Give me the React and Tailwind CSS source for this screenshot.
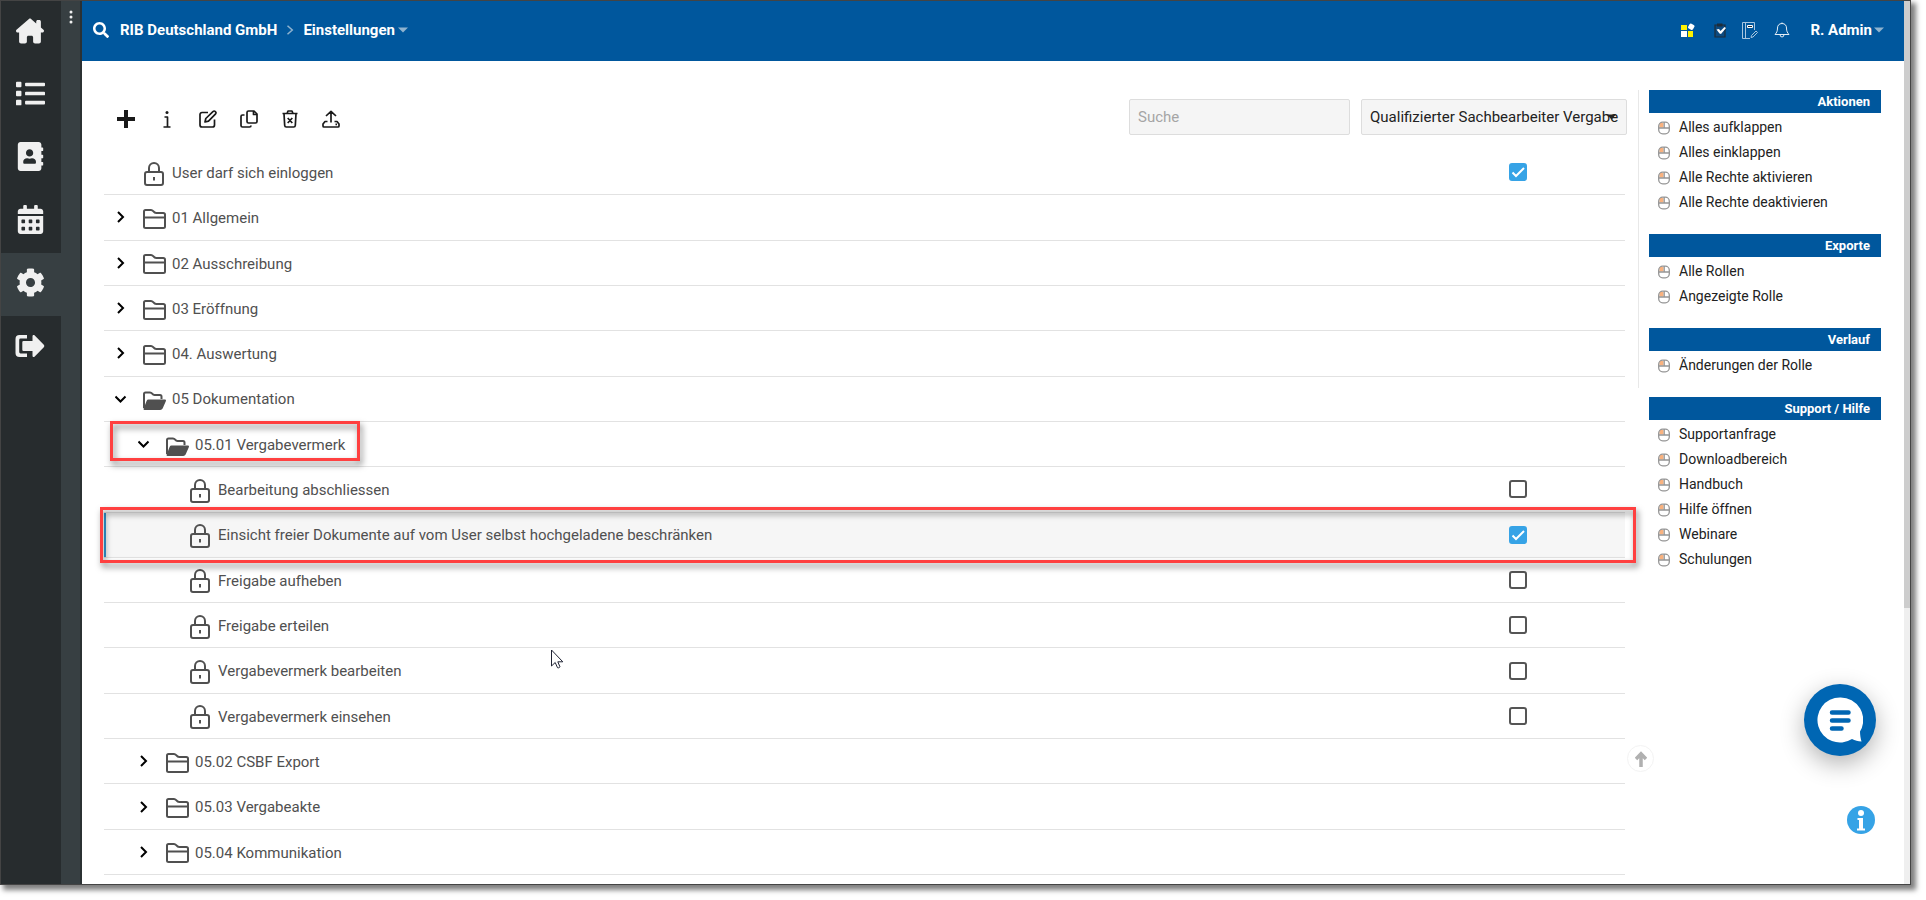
// src/App.jsx
import { useState } from "react";
import { FaList, FaAddressBook, FaCalendarAlt, FaCog, FaSearch } from "react-icons/fa";
import { FaHouseChimney } from "react-icons/fa6";

const rows = [
  { id: "login", level: 0, type: "right", label: "User darf sich einloggen", checked: true },
  { id: "01", level: 0, type: "closed", label: "01 Allgemein" },
  { id: "02", level: 0, type: "closed", label: "02 Ausschreibung" },
  { id: "03", level: 0, type: "closed", label: "03 Eröffnung" },
  { id: "04", level: 0, type: "closed", label: "04. Auswertung" },
  { id: "05", level: 0, type: "open", label: "05 Dokumentation" },
  { id: "05.01", level: 1, type: "open", label: "05.01 Vergabevermerk", marked: true },
  { id: "close", level: 2, type: "right", label: "Bearbeitung abschliessen" },
  {
    id: "view-free",
    level: 2,
    type: "right",
    label: "Einsicht freier Dokumente auf vom User selbst hochgeladene beschränken",
    checked: true,
    active: true,
  },
  { id: "revoke", level: 2, type: "right", label: "Freigabe aufheben" },
  { id: "grant", level: 2, type: "right", label: "Freigabe erteilen" },
  { id: "edit", level: 2, type: "right", label: "Vergabevermerk bearbeiten", pointer: true },
  { id: "view", level: 2, type: "right", label: "Vergabevermerk einsehen" },
  { id: "05.02", level: 1, type: "closed", label: "05.02 CSBF Export" },
  { id: "05.03", level: 1, type: "closed", label: "05.03 Vergabeakte" },
  { id: "05.04", level: 1, type: "closed", label: "05.04 Kommunikation" },
];

const sections = [
  {
    title: "Aktionen",
    links: ["Alles aufklappen", "Alles einklappen", "Alle Rechte aktivieren", "Alle Rechte deaktivieren"],
  },
  { title: "Exporte", links: ["Alle Rollen", "Angezeigte Rolle"] },
  { title: "Verlauf", links: ["Änderungen der Rolle"] },
  {
    title: "Support / Hilfe",
    links: ["Supportanfrage", "Downloadbereich", "Handbuch", "Hilfe öffnen", "Webinare", "Schulungen"],
  },
];

const indent = ["pl-0", "pl-[23px]", "pl-[46px]"];

/* Icons */

const SignOutIcon = () => (
  <svg width="30" height="24" viewBox="0 0 30 24" fill="currentColor">
    <path d="M12 1H4.5A4 4 0 0 0 .5 5v14a4 4 0 0 0 4 4H12v-3.6H5.6a1.4 1.4 0 0 1-1.4-1.4V6a1.4 1.4 0 0 1 1.4-1.4H12z" />
    <path d="M8.5 7h9V2.2c0-1.2 1.2-1.7 2-.9l9.3 9.5a1.7 1.7 0 0 1 0 2.4l-9.3 9.5c-.8.8-2 .3-2-.9V17h-9A1.2 1.2 0 0 1 7.300 15.800V8.200A1.200 1.200 0 0 1 8.500 7z" />
  </svg>
);

const FolderIcon = () => (
  <svg width="24" height="22" viewBox="0 0 24 22" fill="none" stroke="currentColor" strokeWidth="2" strokeLinejoin="round">
    <path d="M2 18.500V3.500C2 2.500 2.500 2 3.500 2H9c1 0 1.600.500 2.200 1.200.8 1 1.500 1.800 3 1.800h7c1 0 1.800.6 1.800 1.700v11.800c0 1-.7 1.500-1.700 1.500h-17.600c-1 0-1.700-.5-1.700-1.500zM2 9.500h21" />
  </svg>
);

const FolderOpenIcon = () => (
  <svg width="24" height="22" viewBox="0 0 24 22" fill="none" stroke="currentColor" strokeWidth="2" strokeLinejoin="round">
    <path d="M2 19V5c0-1 .5-1.500 1.500-1.500H8c1 0 1.600.5 2.200 1.200.6.8 1.300 1.300 2.300 1.300H18c1 0 1.500.5 1.500 1.500V10" />
    <path d="M6.500 11.500H23l-3.300 7.600c-.3.600-.7.900-1.400.9H2.500l3-7.700c.2-.5.500-.8 1-.8z" fill="currentColor" />
  </svg>
);

const LockIcon = () => (
  <svg width="24" height="26" viewBox="0 0 24 26" fill="none" stroke="currentColor" strokeWidth="2">
    <rect x="3" y="11" width="18" height="13" rx="2" />
    <path d="M7 11V7a5 5 0 0 1 10 0v4" />
    <path d="M12 16v3.500" />
  </svg>
);

const Chevron = ({ open }) => (
  <svg width="12" height="12" viewBox="0 0 12 12" fill="none" stroke="#000" strokeWidth="2">
    <path d={open ? "M.5 3.500 5.500 8.500 10.500 3.500" : "M3 1 8 6 3 11"} />
  </svg>
);

const Caret = () => (
  <svg width="10" height="6" viewBox="0 0 10 6" fill="#8fb3cf">
    <path d="M0 .5h10L5 5.500z" />
  </svg>
);

const MouseIcon = () => (
  <svg width="12" height="14" viewBox="0 0 12 14" fill="none" stroke="#959595" strokeWidth="1.300">
    <rect x="1.500" y="2" width="4" height="4.500" fill="#f9b27f" stroke="none" />
    <rect x=".7" y="1.200" width="10.600" height="11.600" rx="4" />
    <path d="M6.200 1v6M.5 7h11" />
  </svg>
);

const PointerIcon = () => (
  <svg width="13" height="20" viewBox="0 0 13 20" fill="#fff" stroke="#1e2233" strokeWidth="1">
    <path d="M.5 1v16l3.700-3.500 2.300 5.200c.8.400 2 0 2.500-.8L6.800 12.800h5z" />
  </svg>
);

const toolbar = [
  {
    label: "Neu",
    icon: <path d="M9 0v18M0 9h18" strokeWidth="4" />,
  },
  {
    label: "Info",
    icon: (
      <>
        <path d="M6.500 7h3v9.500M5.500 17h7" />
        <circle cx="9" cy="2.500" r="1.500" fill="currentColor" stroke="none" />
      </>
    ),
  },
  {
    label: "Bearbeiten",
    icon: (
      <>
        <path d="M9 2.500H3a2 2 0 0 0-2 2V15a2 2 0 0 0 2 2h10.500a2 2 0 0 0 2-2V9.500" />
        <path d="M6 12l.8-3.500L14.200 1.400a1.300 1.300 0 0 1 1.900 0l.5.500a1.300 1.300 0 0 1 0 1.900L9.500 11.200z" />
      </>
    ),
  },
  {
    label: "Kopieren",
    icon: (
      <>
        <path d="M8.500 1h5.500l3 3v7.500a1.500 1.500 0 0 1-1.500 1.500h-7A1.500 1.500 0 0 1 7 11.500v-9A1.500 1.500 0 0 1 8.500 1z" />
        <path d="M13.500 1v3.500H17" />
        <path d="M4.500 5h-2A1.500 1.500 0 0 0 1 6.500v9A1.500 1.500 0 0 0 2.500 17h7a1.500 1.500 0 0 0 1.500-1.500" />
      </>
    ),
  },
  {
    label: "Löschen",
    icon: (
      <path d="M1.500 3.500h15M6 3.500 7 1h4l1 2.500M3 3.500l.7 12A1.600 1.600 0 0 0 5.300 17h7.400a1.600 1.600 0 0 0 1.600-1.500l.7-12M6.700 8l4.600 5M11.300 8l-4.600 5" />
    ),
  },
  {
    label: "Exportieren",
    icon: (
      <>
        <path d="M9 12.500V1.500M4 6l5-4.700L14 6M5.500 11.500H3L1 14v2a1 1 0 0 0 1 1h14a1 1 0 0 0 1-1v-2l-2-2.500h-2.500" />
        <path d="M13.500 14.300h1.500" />
      </>
    ),
  },
];

const navItems = [
  { label: "Start", icon: <FaHouseChimney size={28} /> },
  { label: "Liste", icon: <FaList size={29} /> },
  { label: "Adressbuch", icon: <FaAddressBook size={29} /> },
  { label: "Kalender", icon: <FaCalendarAlt size={29} /> },
  { label: "Einstellungen", icon: <FaCog size={29} />, active: true },
  { label: "Abmelden", icon: <SignOutIcon /> },
];

const Sidebar = () => (
  <>
    <nav className="flex w-[60px] shrink-0 flex-col bg-[#272c2e] text-[#f0f0f0]">
      {navItems.map((item) => (
        <a
          key={item.label}
          href="#"
          aria-label={item.label}
          className={`flex h-[63px] items-center justify-center pb-1 pr-[2px] ${item.active ? "bg-[#373f42]" : ""}`}
        >
          {item.icon}
        </a>
      ))}
    </nav>
    <div className="flex w-[21px] shrink-0 flex-col items-center border-r-2 border-[#2b3133] bg-[#373f42] pt-[9px]">
      <button type="button" aria-label="Menü">
        <svg width="4" height="14" viewBox="0 0 4 14" fill="#f0f0f0">
          <circle cx="2" cy="2" r="1.500" />
          <circle cx="2" cy="7" r="1.500" />
          <circle cx="2" cy="12" r="1.500" />
        </svg>
      </button>
    </div>
  </>
);

const Header = () => (
  <header className="flex h-[60px] shrink-0 items-center bg-[#00579d] pb-[2px] pl-[11px] pr-5 text-[15px] font-bold text-white">
    <button type="button" aria-label="Suchen">
      <FaSearch size={16} />
    </button>
    <a href="#" className="ml-[11px]">
      RIB Deutschland GmbH
    </a>
    <svg className="mx-[9px]" width="8" height="10" viewBox="0 0 8 10" fill="none" stroke="#8fb3cf" strokeWidth="1.500">
      <path d="M1.500 .7 6.300 5 1.500 9.300" />
    </svg>
    <button type="button" className="flex items-center gap-[3px]">
      Einstellungen
      <Caret />
    </button>

    <div className="ml-auto flex items-center">
      <button type="button" aria-label="Apps">
        <svg width="14" height="14" viewBox="0 0 14 14">
          <path d="M0 2h6v5H0zM7 8h5v6H7z" fill="#fff200" />
          <path d="M0 8h6v6H0z" fill="#fff" />
          <rect x="7.500" y="1" width="5.500" height="5.500" rx="1.500" fill="#fff" transform="rotate(30 10.250 3.750)" />
        </svg>
      </button>
      <button type="button" aria-label="Aufgaben" className="ml-[19px]">
        <svg width="12" height="16" viewBox="0 0 12 16">
          <path d="M1 3h10v12H1z" fill="#0c4a80" stroke="#1f2d3a" strokeWidth="1.200" />
          <path d="M3 1.500h5.500v3H3z" fill="#1f2d3a" />
          <path d="m2.500 7.500 2.500-.5 1.500 2L10.500 5l1.500 1-5 6-1.500-.5z" fill="#fff" />
        </svg>
      </button>
      <button type="button" aria-label="Notizen" className="ml-[16px]">
        <svg width="16" height="17" viewBox="0 0 16 17" fill="none" stroke="#a8c6df" strokeWidth="1">
          <path d="M8 16.500H.5V.500h12V8M3.500.5v16" />
          <path d="M5.500 3.500h5v2h-5z" stroke="#fff" fill="#1f2d3a" />
          <path d="m9.500 13.500 4.500-4.500 1.500 1.500-4.500 4.500-2 .5z" />
        </svg>
      </button>
      <button type="button" aria-label="Benachrichtigungen" className="ml-[16px]">
        <svg width="16" height="16" viewBox="0 0 16 16" fill="none" stroke="#e5eef6" strokeWidth="1">
          <path d="M8 1.500V.500M8 1.500c-3 0-4.500 2-4.500 4.500 0 3.500-1 4.700-2.500 6.500h14c-1.500-1.800-2.500-3-2.500-6.500 0-2.500-1.500-4.500-4.500-4.500zM6 12.500a2 2.500 0 0 0 4 0" />
        </svg>
      </button>
      <button type="button" className="ml-[20px] flex items-center gap-[2px]">
        R. Admin
        <Caret />
      </button>
    </div>
  </header>
);

const TreeRow = ({ row, checked, onToggle }) => {
  const isRight = row.type === "right";

  return (
    <li
      className={`relative flex min-h-[40px] flex-1 items-center border-b border-[#e2e2e2] pr-[98px] ${
        row.active ? "z-10 bg-[#f6f6f6]" : ""
      }`}
    >
      {row.active && <span className="absolute inset-y-0 left-0 w-[2px] bg-[#3299d4]" />}

      <div className={`flex items-center ${indent[row.level]}`}>
        <span className="flex w-[34px] justify-center">
          {!isRight && (
            <button type="button" aria-label={row.label} aria-expanded={row.type === "open"}>
              <Chevron open={row.type === "open"} />
            </button>
          )}
        </span>
        <span className="ml-1 pt-[3px]">
          {isRight ? <LockIcon /> : row.type === "open" ? <FolderOpenIcon /> : <FolderIcon />}
        </span>
        {isRight ? (
          <label htmlFor={row.id} className="ml-[6px] pt-[2px]">
            {row.label}
          </label>
        ) : (
          <span className="ml-[6px] pt-[2px]">{row.label}</span>
        )}
      </div>

      {isRight && (
        <span className="ml-auto grid">
          <input
            id={row.id}
            type="checkbox"
            checked={checked}
            onChange={() => onToggle(row.id)}
            className="col-start-1 row-start-1 size-[18px] appearance-none rounded-[3px] border-2 border-[#555] bg-white checked:border-[#36a3e6] checked:bg-[#36a3e6]"
          />
          {checked && (
            <svg
              className="pointer-events-none col-start-1 row-start-1"
              width="18"
              height="18"
              viewBox="0 0 18 18"
              fill="none"
              stroke="#fff"
              strokeWidth="2"
            >
              <path d="m3.500 9.500 3.500 3.500 8-8" />
            </svg>
          )}
        </span>
      )}

      {/* Highlight frames */}
      {row.marked && (
        <span className="pointer-events-none absolute -top-px left-[6px] h-[40px] w-[250px] border-3 border-[#ff4040] drop-shadow-[2px_4px_3px_rgba(0,0,0,0.5)]" />
      )}
      {row.active && (
        <span className="pointer-events-none absolute -bottom-[6px] -left-1 -right-[11px] -top-[6px] border-3 border-[#ff4040] drop-shadow-[2px_4px_3px_rgba(0,0,0,0.5)]" />
      )}
      {row.pointer && (
        <span className="pointer-events-none absolute left-[447px] top-px">
          <PointerIcon />
        </span>
      )}
    </li>
  );
};

const ActionPanel = () => (
  <aside className="flex w-[242px] shrink-0 flex-col gap-[19px]">
    {sections.map((section) => (
      <section key={section.title} className="ml-[10px]">
        <h2 className="mb-[2px] h-[23px] bg-[#00579d] pr-[11px] text-right text-[13px] font-bold leading-[23px] text-white">
          {section.title}
        </h2>
        <ul>
          {section.links.map((link) => (
            <li key={link}>
              <a href="#" className="flex h-[25px] items-center gap-[9px] pl-[9px] text-[14px] text-[#222]">
                <MouseIcon />
                {link}
              </a>
            </li>
          ))}
        </ul>
      </section>
    ))}
  </aside>
);

const App = () => {
  const [checkedIds, setCheckedIds] = useState(rows.filter((r) => r.checked).map((r) => r.id));

  const handleToggle = (id) => {
    setCheckedIds((prev) => (prev.includes(id) ? prev.filter((x) => x !== id) : [...prev, id]));
  };

  return (
    <div className="flex min-h-screen bg-white pb-[15px] pr-[15px] font-['Roboto',sans-serif]">
      <div className="relative flex flex-1 border border-[#444] bg-white shadow-[4px_4px_5px_1px_rgba(0,0,0,0.5)]">
        <Sidebar />

        <div className="flex min-w-0 flex-1 flex-col">
          <Header />

          <main className="flex flex-1 pl-[22px] pr-[23px] pt-[29px]">
            <div className="flex min-w-0 flex-1 flex-col pb-[9px]">
              {/* Toolbar */}
              <div className="mr-[11px] mt-[9px] flex h-[51px] items-start">
                <div className="flex h-10 items-center gap-[23px] pl-[13px] text-[#1a1a1a]">
                  {toolbar.map((tool) => (
                    <button key={tool.label} type="button" aria-label={tool.label}>
                      <svg width="18" height="18" viewBox="0 0 18 18" fill="none" stroke="currentColor" strokeWidth="1.700" strokeLinejoin="round">
                        {tool.icon}
                      </svg>
                    </button>
                  ))}
                </div>
                <input
                  type="text"
                  aria-label="Suche"
                  placeholder="Suche"
                  className="ml-auto h-9 w-[221px] rounded-[2px] border border-[#ddd] bg-[#f5f5f5] px-2 text-[15px] placeholder:text-[#a5a5a5]"
                />
                <div className="relative ml-[11px]">
                  <select
                    aria-label="Rolle"
                    className="h-9 w-[266px] appearance-none rounded-[2px] border border-[#ddd] bg-[#f5f5f5] pl-2 text-[15px] text-[#222]"
                  >
                    <option>Qualifizierter Sachbearbeiter Vergabe</option>
                  </select>
                  <svg className="pointer-events-none absolute right-[11px] top-[15px]" width="9" height="6" viewBox="0 0 9 6" fill="#222">
                    <path d="M0 .5h9L4.500 5.500z" />
                  </svg>
                </div>
              </div>

              {/* Rights tree */}
              <ul className="mr-[13px] flex flex-1 flex-col text-[15px] text-[#505050]">
                {rows.map((row) => (
                  <TreeRow key={row.id} row={row} checked={checkedIds.includes(row.id)} onToggle={handleToggle} />
                ))}
              </ul>
            </div>

            <div className="h-[298px] w-px shrink-0 bg-[#e8e8e8]" />
            <ActionPanel />
          </main>
        </div>

        {/* Scrollbar */}
        <div className="w-[6px] shrink-0 bg-[#efefef]">
          <div className="h-[607px] bg-[#cdcdcd]" />
        </div>

        {/* Floating buttons */}
        <a
          href="#"
          aria-label="Nach oben"
          className="absolute bottom-[112px] right-[256px] flex size-[27px] items-center justify-center rounded-full border border-[#f3f3f3] bg-white"
        >
          <svg width="12" height="16" viewBox="0 0 12 16" fill="none" stroke="#b0b0b0" strokeWidth="3.500">
            <path d="M6 16V2.500M1 8 6 2.800l5 5.200" />
          </svg>
        </a>
        <button
          type="button"
          aria-label="Chat"
          className="absolute bottom-[128px] right-[34px] flex size-[72px] items-center justify-center rounded-full bg-[#0066b3] shadow-[0_8px_24px_rgba(0,0,0,0.3)]"
        >
          <svg width="46" height="46" viewBox="0 0 46 46">
            <path d="M23 .5a22.500 22.500 0 1 0 12 41.500c3 1.500 6 2.200 9.500 2.600-.8-3-1.500-6.600-1.500-10A22.500 22.500 0 0 0 23 .5z" fill="#fff" />
            <path d="M15 15.500h16.500M15 23.500h16.500M15 31.500h9.500" stroke="#0066b3" strokeWidth="4.500" strokeLinecap="round" />
          </svg>
        </button>
        <button type="button" aria-label="Information" className="absolute bottom-[50px] right-[35px]">
          <svg width="28" height="28" viewBox="0 0 28 28">
            <circle cx="14" cy="14" r="14" fill="#36a3e6" />
            <circle cx="14" cy="7" r="3" fill="#fff" />
            <path d="M10.500 12H16v10.500h2V24.500h-8v-2h2V14h-1.500z" fill="#fff" />
          </svg>
        </button>
      </div>
    </div>
  );
};

export default App;
